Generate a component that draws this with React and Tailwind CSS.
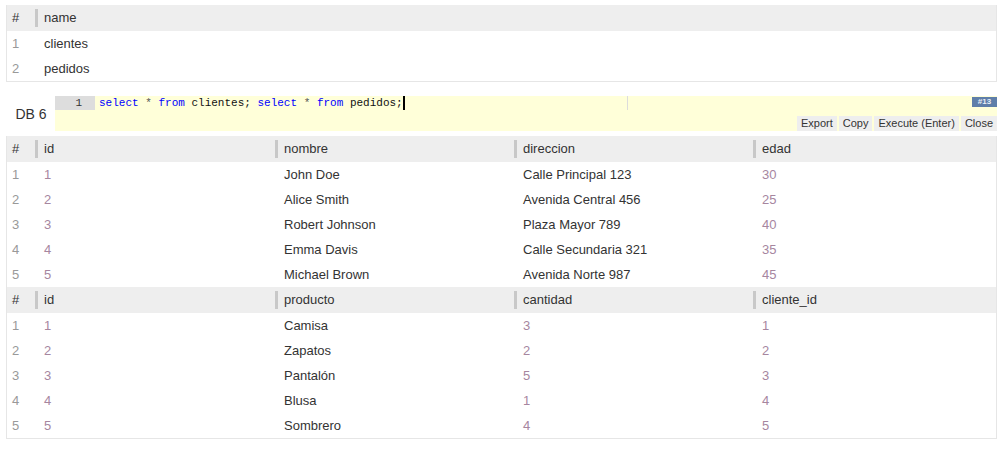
import React from 'react';

const sans = { fontFamily: '"Liberation Sans", Arial, sans-serif' };

const clientes = [
  [1, 'John Doe', 'Calle Principal 123', 30],
  [2, 'Alice Smith', 'Avenida Central 456', 25],
  [3, 'Robert Johnson', 'Plaza Mayor 789', 40],
  [4, 'Emma Davis', 'Calle Secundaria 321', 35],
  [5, 'Michael Brown', 'Avenida Norte 987', 45],
];

const pedidos = [
  [1, 'Camisa', 3, 1],
  [2, 'Zapatos', 2, 2],
  [3, 'Pantalón', 5, 3],
  [4, 'Blusa', 1, 4],
  [5, 'Sombrero', 4, 5],
];

const HeadCell = ({ children }) => (
  <div className="flex items-center h-full">
    <span className="w-[3px] h-[18px] bg-[#c8c8c8]" />
    <span className="pl-[6px]">{children}</span>
  </div>
);

const Cell = ({ value }) => (
  <div className={`pl-[9px] ${typeof value === 'number' ? 'text-[#a6869f]' : ''}`}>{value}</div>
);

// header + rows, columns laid out on a shared grid
const ResultSet = ({ cols, rows, grid }) => (
  <>
    <div className={`grid ${grid} h-[26px] bg-[#eeeeee] items-center text-[#333]`}>
      <div className="pl-[5px]">#</div>
      {cols.map((c) => (
        <HeadCell key={c}>{c}</HeadCell>
      ))}
    </div>
    {rows.map((r, i) => (
      <div key={i} className={`grid ${grid} h-[25px] items-center text-[#333]`}>
        <div className="pl-[5px] text-[#999]">{i + 1}</div>
        {r.map((v, j) => (
          <Cell key={j} value={v} />
        ))}
      </div>
    ))}
  </>
);

const Kw = ({ children }) => <span className="text-[#0000ff]">{children}</span>;
const Op = ({ children }) => <span className="text-[#555]">{children}</span>;

const Editor = () => (
  <div className="flex ml-[6px] mr-[10px] mt-[14px] h-[35px]">
    <div className="w-[49px] flex items-center justify-center pt-[1px] pl-[1px] text-[14px] text-[#333]">DB 6</div>
    <div className="relative flex-1 bg-[#ffffd9]">
      <div className="flex h-[14px] items-center" style={{ fontFamily: '"Liberation Mono", "Courier New", monospace' }}>
        <div className="w-[40px] h-full bg-[#dddddd] text-right pr-[13px] text-[11px] leading-[14px] text-[#333]">1</div>
        <div className="pl-[4px] h-[14px] text-[11px] leading-[14px] text-[#111] whitespace-pre">
          <Kw>select</Kw>{' '}<Op>*</Op>{' '}<Kw>from</Kw>{' clientes; '}<Kw>select</Kw>{' '}<Op>*</Op>{' '}
          <Kw>from</Kw>{' pedidos;'}
          <span className="inline-block align-top w-[2px] h-[14px] bg-black" />
        </div>
      </div>
      <div className="absolute left-[572px] top-0 w-px h-[14px] bg-[#dcdcdc]" />
      <div className="absolute top-[1px] right-0 w-[25px] h-[10px] bg-[#5f7ea9] text-[#e8eef6] text-[8px] font-bold leading-[10px] text-center">
        #13
      </div>
      <div className="absolute bottom-0 right-0 flex gap-[2px] text-[11px] text-[#333]">
        {['Export', 'Copy', 'Execute (Enter)', 'Close'].map((b) => (
          <div key={b} className="h-[15px] leading-[15px] px-[4px] bg-[#eeeeee]">
            {b}
          </div>
        ))}
      </div>
    </div>
  </div>
);

export default function App() {
  return (
    <div className="w-[1007px] h-[464px] bg-white text-[13px] overflow-hidden" style={sans}>
      <div className="ml-[6px] mr-[10px] mt-[5px] border-x border-b border-[#e6e6e6]">
        <ResultSet cols={['name']} rows={[['clientes'], ['pedidos']]} grid="grid-cols-[28px_1fr]" />
      </div>
      <Editor />
      <div className="ml-[6px] mr-[10px] mt-[5px] border-x border-b border-[#e6e6e6]">
        <ResultSet
          cols={['id', 'nombre', 'direccion', 'edad']}
          rows={clientes}
          grid="grid-cols-[28px_240px_239px_239px_1fr]"
        />
        <ResultSet
          cols={['id', 'producto', 'cantidad', 'cliente_id']}
          rows={pedidos}
          grid="grid-cols-[28px_240px_239px_239px_1fr]"
        />
      </div>
    </div>
  );
}
